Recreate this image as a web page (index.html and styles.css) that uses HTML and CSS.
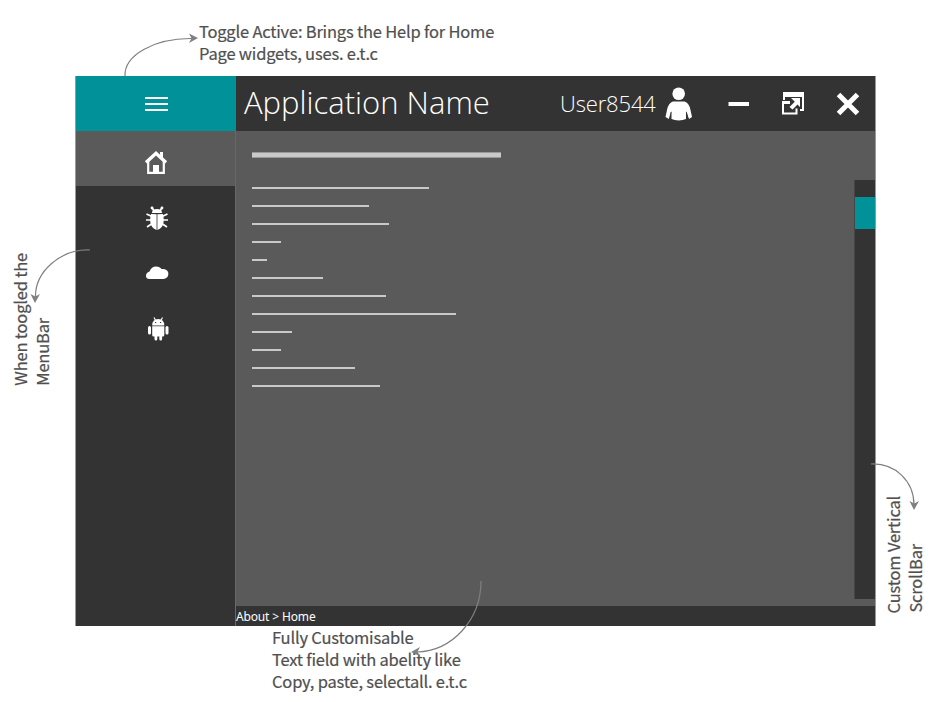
FILE: index.html
```html
<!DOCTYPE html>
<html lang="en">
<head>
<meta charset="utf-8">
<title>Application Name</title>
<link rel="stylesheet" href="styles.css">
</head>
<body>
<main class="window">
  <aside class="sidebar">
    <button class="toggle" aria-label="Menu"><svg width="24" height="16"><path d="M1 2h23M1 8h23M1 14h23" stroke="#fff" stroke-width="2"/></svg></button>
    <nav class="menu">
      <a class="item active"><svg width="24" height="26" viewBox="0 0 24 26"><path d="M4.200 12v11.800h15.600V12" fill="none" stroke="#fff" stroke-width="2.200"/><path d="M2 13.500 12 4.200 22 13.500" fill="none" stroke="#fff" stroke-width="3.400"/><path d="M16 3h3v7l-3-3zM9 16h6v8H9z" fill="#fff"/></svg></a>
      <a class="item"><svg width="24" height="26" viewBox="0 0 24 26"><g fill="none" stroke="#fff" stroke-width="1.700"><path d="M7 2.500 9 6M17 2.500 15 6M8 12 1.500 9M16 12l6.500-3M8 15H1M16 15h7M8 18l-6 4M16 18l6 4"/></g><g fill="#fff"><circle cx="7" cy="3" r="1.400"/><circle cx="17" cy="3" r="1.400"/><path d="M7 8q0-4 5-4t5 4zM11.600 9.200V25Q6 23 5.300 17 5 12 6 9zM12.400 9.200V25q5.500-2 6.200-8 .3-5-.7-8z"/></g></svg></a>
      <a class="item"><svg width="24" height="26" viewBox="0 0 24 26"><path d="M4.500 19Q1 19 1 15.700 1 12.800 4.500 11.500 6.500 6.500 11 6.500q4 0 5.500 2.600 5.500-.6 6.800 3.700.7 5.200-4.800 6.200z" fill="#fff"/></svg></a>
      <a class="item shifted"><svg width="24" height="26" viewBox="0 0 24 26"><g fill="#fff"><path d="M6.200 9.500Q6.200 3 12.200 3T18.300 9.500z"/><path d="M6.200 10.200h12.100V19q0 1.500-1.500 1.500h-.7V23q0 1.500-1.400 1.500T13.300 23v-2.500h-2V23q0 1.500-1.400 1.500T8.500 23v-2.500h-.8q-1.500 0-1.500-1.500z"/><rect x="2" y="10" width="3" height="8.500" rx="1.500"/><rect x="19.500" y="10" width="3" height="8.500" rx="1.500"/></g><path d="m8 1.500 1.500 2.700M16.500 1.500 15 4.200" stroke="#fff" stroke-width="1.200"/><path d="M9 6.500h1.200M14 6.500h1.200" stroke="#333"/></svg></a>
    </nav>
  </aside>
  <section class="main">
    <header class="titlebar">
      <h1 class="title">Application Name</h1>
      <span class="user">User8544</span>
      <svg class="person" width="28" height="34" viewBox="0 0 28 34"><g fill="#fff"><circle cx="13.700" cy="6.800" r="6.300"/><path d="M8 14.500H19.500Q24 15.500 25.500 23l1.500 7-3 2-3-8v8q-3 1.400-7.300 1.400T6.500 32v-8l-2.500 8-3.500-2L2 23Q3.500 15.500 8 14.500z"/></g><path d="M6 25 4.500 32M21.400 25 23 32" stroke="#333" stroke-width=".8"/></svg>
      <svg class="minimize" width="22" height="6"><path d="M.5 3h20.500" stroke="#fff" stroke-width="4"/></svg>
      <svg class="restore" width="24" height="24" viewBox="0 0 24 24"><path d="M3 8V1h19v17h-3" fill="none" stroke="#fff" stroke-width="2"/><path d="M2 0h21v5H2z" fill="#fff"/><path d="M9 10H2v11.500h13.500v-5" fill="none" stroke="#fff" stroke-width="2"/><path d="M1 9h8v3H1zM10 6h9v9l-2.500-2.500-5 5L8.500 15l5.300-5.300z" fill="#fff"/></svg>
      <svg class="close" width="24" height="24"><path d="m2.500 2.500 19 19m0-19-19 19" stroke="#fff" stroke-width="5"/></svg>
    </header>
    <div class="content">
      <div class="text-field">
        <i class="line heading"></i>
        <i class="line w1"></i><i class="line w2"></i><i class="line w3"></i><i class="line w4"></i><i class="line w5"></i><i class="line w6"></i>
        <i class="line w7"></i><i class="line w8"></i><i class="line w9"></i><i class="line w4"></i><i class="line w10"></i><i class="line w11"></i>
      </div>
      <div class="scroll-track"><div class="scroll-thumb"></div></div>
    </div>
    <footer class="status">About &gt; Home</footer>
  </section>
</main>
<p class="note note-toggle">Toggle Active: Brings the Help for Home<br>Page widgets, uses. e.t.c</p>
<p class="note note-menu">When toogled the<br>MenuBar</p>
<p class="note note-scroll">Custom Vertical<br>ScrollBar</p>
<p class="note note-field">Fully Customisable<br>Text field with abelity like<br>Copy, paste, selectall. e.t.c</p>
<svg class="arrows" width="951" height="702">
  <g fill="none" stroke="#808080" stroke-width="1.200"><path d="M125 76C124 55 155 38 192 38.500"/><path d="M90 250C60 249 35 272 35.500 297"/><path d="M871 464C895 463 914 481 914 505"/><path d="M481 581C481 620 452 651 417 652"/></g>
  <g fill="#808080"><path d="m198 38-9-4.500 2.500 4.700-2.500 4.800z"/><path d="m35 303-4.500-9 4.800 2.500L40 294z"/><path d="m914 510-4.500-9 4.700 2.500L919 501z"/><path d="m411 652 9-5-2.500 4.700 3 4.800z"/></g>
</svg>
</body>
</html>
```
FILE: styles.css
```css
* { box-sizing: border-box; }
body { margin: 0; width: 951px; height: 702px; overflow: hidden; background: #fff; position: relative; padding: 76px 0 0 75px; }
svg { display: block; flex: none; }
.window { width: 801px; height: 550px; display: grid; grid-template-columns: 159px 1fr; border-left: 1px solid #999; border-right: 1px solid #999; background: #333; }
.sidebar { display: flex; flex-direction: column; }
.toggle { height: 55px; border: 0; padding: 0 0 0 1px; background: #009199; display: flex; align-items: center; justify-content: center; }
.item { height: 55.5px; display: flex; align-items: center; justify-content: center; padding: 8px 0 0 3px; }
.active { height: 55px; background: #5a5a5a; padding: 6px 0 0 1px; }
.shifted { padding-left: 4px; }
.main { display: flex; flex-direction: column; border-left: 1px solid #686868; }
.titlebar { height: 55px; display: flex; align-items: center; color: #fff; font-family: "Open Sans", sans-serif; }
.title { margin: 0 0 3px 8px; width: 316px; font-size: 31px; font-weight: 300; line-height: 50px; white-space: nowrap; }
.user { width: 105px; margin-bottom: 2px; font-size: 22px; letter-spacing: -.15px; font-weight: 300; white-space: nowrap; }
.minimize { margin-left: 35px; }
.restore { margin-left: 31px; }
.close { margin-left: 31px; }
.content { height: 475px; background: #5a5a5a; display: flex; justify-content: space-between; }
.text-field { padding: 21px 0 0 16px; display: flex; flex-direction: column; gap: 16px; }
.line { display: block; height: 2px; background: #c9c9c9; }
.heading { width: 249px; height: 6px; margin-bottom: 13px; border-top: 1px solid #999; border-bottom: 1px solid #999; }
.w1 { width: 177px; } .w2 { width: 117px; } .w3 { width: 137px; } .w4 { width: 29px; }
.w5 { width: 15px; } .w6 { width: 71px; } .w7 { width: 134px; } .w8 { width: 204px; }
.w9 { width: 40px; } .w10 { width: 103px; } .w11 { width: 128px; }
.scroll-track { width: 21px; height: 419px; margin-top: 49px; padding-top: 17px; background: #333; border-left: 1px solid #464646; }
.scroll-thumb { height: 32px; background: #009199; }
.status { height: 20px; color: #fff; font: 12px/21px "Noto Sans", sans-serif; letter-spacing: -.15px; }
.note { position: absolute; margin: 0; font: 400 16.5px/22px "Noto Sans CJK SC", sans-serif; letter-spacing: -.2px; color: #505050; -webkit-text-stroke: .2px #505050; white-space: nowrap; }
.note-toggle { left: 199px; top: 20px; }
.note-field { left: 272px; top: 626px; }
.note-menu, .note-scroll { writing-mode: sideways-lr; }
.note-menu { left: 9px; bottom: 316px; }
.note-scroll { left: 882px; bottom: 89px; }
.arrows { position: absolute; left: 0; top: 0; }
```
